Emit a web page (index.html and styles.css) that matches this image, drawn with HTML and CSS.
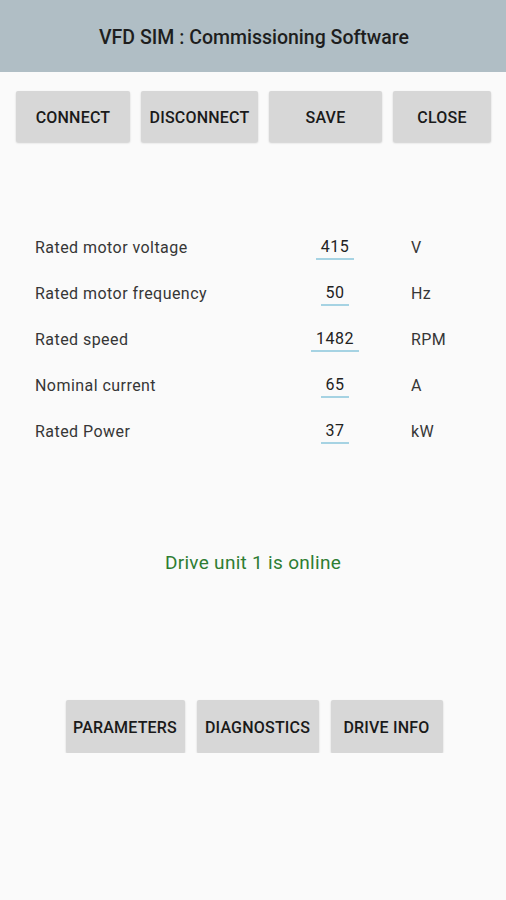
FILE: index.html
```html
<!DOCTYPE html>
<html lang="en">
<head>
  <meta charset="UTF-8">
  <title>VFD SIM : Commissioning Software</title>
  <link rel="stylesheet" href="styles.css">
</head>
<body>

<header class="appbar">VFD SIM : Commissioning Software</header>

<div class="toolbar">
  <button class="btn w-connect">Connect</button>
  <button class="btn w-disconnect">Disconnect</button>
  <button class="btn w-save">Save</button>
  <button class="btn w-close">Close</button>
</div>

<div class="params">
  <div class="label">Rated motor voltage</div>
  <div class="value"><span>415</span></div>
  <div class="unit">V</div>

  <div class="label">Rated motor frequency</div>
  <div class="value"><span>50</span></div>
  <div class="unit">Hz</div>

  <div class="label">Rated speed</div>
  <div class="value"><span>1482</span></div>
  <div class="unit">RPM</div>

  <div class="label">Nominal current</div>
  <div class="value"><span>65</span></div>
  <div class="unit">A</div>

  <div class="label">Rated Power</div>
  <div class="value"><span>37</span></div>
  <div class="unit">kW</div>
</div>

<p class="status">Drive unit 1 is online</p>

<div class="nav">
  <button class="btn w-params">Parameters</button>
  <button class="btn w-diag">Diagnostics</button>
  <button class="btn w-info">Drive Info</button>
</div>

</body>
</html>
```

FILE: styles.css
```css
body { margin: 0; background: #fafafa; font-family: Roboto, "Noto Sans", sans-serif; color: #333; }

.appbar { height: 72px; box-sizing: border-box; padding: 3px 0 0 2px; background: #b0bec5; color: #1e1e1e;
  font-size: 19.5px; font-weight: 500; display: flex; align-items: center; justify-content: center; }

.btn { height: 51px; border: none; border-radius: 2px; background: #d7d7d7; color: #1a1a1a;
  font-family: inherit; font-size: 16px; font-weight: 500; text-transform: uppercase; letter-spacing: 0.2px;
  padding: 1px 0 0; box-shadow: 0 1px 2px rgba(0,0,0,0.18); }

.toolbar { display: flex; gap: 11px; padding: 19px 0 0 16px; }
.w-connect { width: 114px; }
.w-disconnect { width: 117px; }
.w-save { width: 113px; }
.w-close { width: 98px; }

.params { display: grid; grid-template-columns: 270px 60px auto; grid-auto-rows: 46px;
  align-items: center; margin-top: 82px; padding-left: 35px; font-size: 16px; letter-spacing: 0.45px; }
.label { color: #363636; }
.value { text-align: center; color: #222; }
.value span { display: inline-block; padding: 4px 5px 2px; border-bottom: 2px solid #a6d3e3; line-height: 18px; }
.unit { padding-left: 46px; color: #363636; }

.status { margin: 97px 0 0; text-align: center; color: #2e7d32; font-size: 19px; line-height: 24px; letter-spacing: 0.3px; }

.nav { display: flex; justify-content: center; gap: 12px; margin-top: 125px; padding-left: 2px; }
.nav .btn { height: 53px; }
.w-params { width: 119px; }
.w-diag { width: 122px; }
.w-info { width: 112px; }
```
